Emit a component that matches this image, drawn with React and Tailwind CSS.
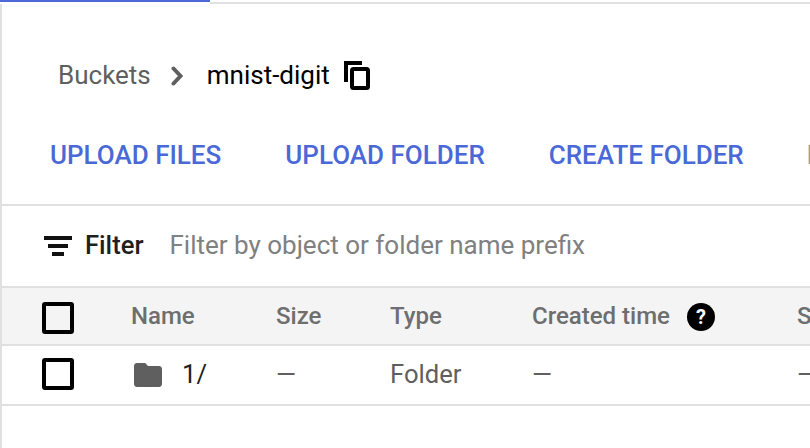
const FONT = "font-['Roboto',sans-serif]";

function Checkbox() {
  return <div className="w-[32px] h-[32px] border-[4px] border-black rounded-[3px] bg-transparent" />;
}

function ActionLink({ children, className = "" }) {
  return <span className={`text-[26px] leading-none font-medium whitespace-nowrap shrink-0 ${className}`}>{children}</span>;
}

export default function App() {
  return (
    <div className={`w-[810px] h-[448px] overflow-hidden bg-white flex flex-col ${FONT}`}>
      {/* TAB BAR LINE */}
      <div className="h-[4px] flex shrink-0">
        <div className="w-[210px] h-[2px] bg-[#4a69d6]" />
        <div className="flex-1 h-[4px] border-t-2 border-white border-b-2 border-b-[#e0e0e0]" />
      </div>

      <div className="flex-1 border-l-2 border-[#e0e0e0] flex flex-col">
        {/* BREADCRUMB */}
        <div className="h-[202px] shrink-0 border-b-2 border-[#e0e0e0] flex flex-col">
          <div className="flex items-center h-[32px] mt-[55px] pl-[56px]">
            <span className="text-[26px] text-[#5f5f5f]">Buckets</span>
            <svg className="ml-[20px] mt-[2px]" width="12" height="20" viewBox="0 0 12 20" fill="none">
              <path d="M2.5 2.5 L9.5 10 L2.5 17.5" stroke="#5f5f5f" strokeWidth="4" strokeLinecap="round" strokeLinejoin="miter" />
            </svg>
            <span className="ml-[24px] text-[26px] text-black">mnist-digit</span>
            <svg className="ml-[14px] mt-[1px]" width="26" height="29" viewBox="0 0 26 29" fill="none">
              <path d="M18 2 H2 V21" stroke="black" strokeWidth="4" />
              <rect x="8" y="8" width="16" height="19" rx="1.5" stroke="black" strokeWidth="4" />
            </svg>
          </div>

          {/* ACTIONS */}
          <div className="flex items-center mt-[51px] pl-[48px] text-[#4a69d6]">
            <ActionLink>UPLOAD FILES</ActionLink>
            <ActionLink className="ml-[64px]">UPLOAD FOLDER</ActionLink>
            <ActionLink className="ml-[64px]">CREATE FOLDER</ActionLink>
            <ActionLink className="ml-[63px] text-[#9e9e9e]">DELETE</ActionLink>
          </div>
        </div>

        {/* FILTER */}
        <div className="h-[80px] shrink-0 flex items-center pl-[42px] pb-[2px]">
          <svg className="mt-[2px]" width="28" height="20" viewBox="0 0 28 20" fill="#111">
            <rect x="0" y="0" width="28" height="4" />
            <rect x="4" y="8" width="20" height="4" />
            <rect x="8" y="16" width="12" height="4" />
          </svg>
          <span className="ml-[13px] text-[25.6px] font-medium text-[#1f1f1f]">Filter</span>
          <span className="ml-[26px] text-[26px] text-[#808080]">Filter by object or folder name prefix</span>
        </div>

        {/* TABLE HEAD */}
        <div className="h-[60px] shrink-0 bg-[#f4f4f4] border-y-2 border-[#e0e0e0] flex items-center pl-[40px] text-[24px] font-medium text-[#6e6e6e] whitespace-nowrap">
          <div className="w-[89px] shrink-0 pt-[4px]"><Checkbox /></div>
          <div className="w-[145px] shrink-0">Name</div>
          <div className="w-[114px] shrink-0">Size</div>
          <div className="w-[142px] shrink-0">Type</div>
          <div className="w-[265px] shrink-0 flex items-center">
            <span>Created time</span>
            <span className="ml-[17px] mt-[2px] w-[28px] h-[28px] rounded-full bg-black text-white text-[20px] font-bold flex items-center justify-center">?</span>
          </div>
          <div>Storage</div>
        </div>

        {/* TABLE ROW */}
        <div className="h-[60px] shrink-0 border-b-2 border-[#e0e0e0] flex items-center pl-[40px] pb-[2px] text-[25.6px] text-[#5f5f5f] whitespace-nowrap">
          <div className="w-[89px] shrink-0"><Checkbox /></div>
          <div className="w-[145px] shrink-0 flex items-center">
            <svg className="ml-[3px] mt-[2px]" width="28" height="24" viewBox="2 4 20 16" preserveAspectRatio="none" fill="#5f5f5f">
              <path d="M10 4H4c-1.1 0-2 .9-2 2v12c0 1.1.9 2 2 2h16c1.1 0 2-.9 2-2V8c0-1.1-.9-2-2-2h-8l-2-2z" />
            </svg>
            <span className="ml-[20px] text-[#1f1f1f]">1/</span>
          </div>
          <div className="w-[114px] shrink-0">—</div>
          <div className="w-[142px] shrink-0">Folder</div>
          <div className="w-[265px] shrink-0">—</div>
          <div>—</div>
        </div>
      </div>
    </div>
  );
}
